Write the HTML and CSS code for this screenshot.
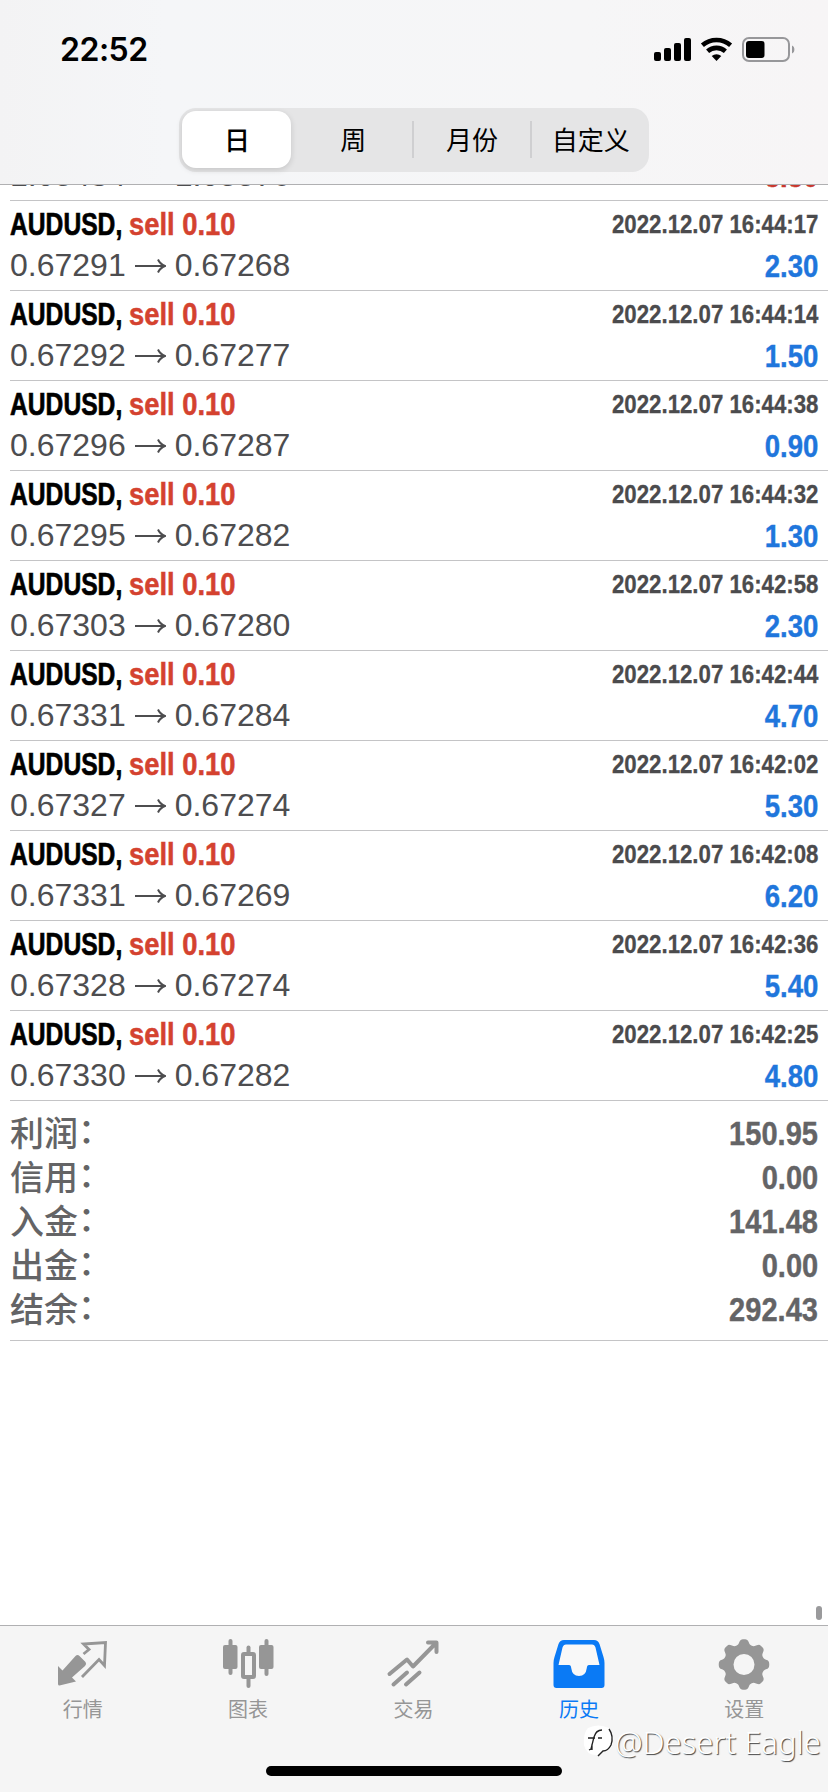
FILE: index.html
```html
<!DOCTYPE html>
<html lang="zh-CN">
<head>
<meta charset="utf-8">
<title>历史</title>
<link rel="stylesheet" href="styles.css">
</head>
<body>
<div class="screen">
  <header class="header">
    <div class="status">
      <span class="clock">22:52</span>
      <svg class="status-icons" width="144" height="28" viewBox="0 0 144 28">
        <rect x="1" y="16" width="7" height="9" rx="2"/>
        <rect x="11" y="12" width="7" height="13" rx="2"/>
        <rect x="21" y="7" width="7" height="18" rx="2"/>
        <rect x="31" y="2" width="7" height="23" rx="2"/>
        <g fill="none" stroke="#000" stroke-width="4.6">
          <path d="M49.4 9.2a21.5 21.5 0 0 1 28.2 0"/>
          <path d="M54.6 15.2a13.5 13.5 0 0 1 17.8 0"/>
        </g>
        <path d="M58.7 19.900a7.500 7.500 0 0 1 9.600 0L63.500 25z"/>
        <rect x="90" y="2" width="46" height="23" rx="6" fill="none" stroke="#97979a" stroke-width="2"/>
        <rect x="93" y="5" width="18.500" height="17" rx="3"/>
        <path d="M139 9.500c3.200 1.200 3.200 6.800 0 8z" fill="#97979a"/>
      </svg>
    </div>
    <nav class="segments">
      <span class="segment active">日</span>
      <span class="segment">周</span>
      <span class="segment ruled">月份</span>
      <span class="segment ruled">自定义</span>
    </nav>
  </header>
  <main class="history" id="history"></main>
  <footer class="tabs">
    <a class="tab">
      <svg width="52" height="52" viewBox="0 0 52 52">
        <path d="M1 26l4.500 4.500L18.500 16q2-2 4 0l6 6q1.500 2-.5 4L15 37.500l4 4L2.500 45.500Q1 45.500 1 44z" fill="#969696"/>
        <path d="M26.500 14l5.500-4.500-5.500-5.500L48.500 2.500l-1 23-5.500-6L25 37" fill="none" stroke="#969696" stroke-width="2.800"/>
      </svg>
      <span>行情</span>
    </a>
    <a class="tab">
      <svg width="52" height="52" viewBox="0 0 52 52" fill="#969696">
        <rect x="6.500" y="-1" width="4" height="36" rx="2"/><rect x="1" y="5" width="14.500" height="24" rx="2"/>
        <rect x="42.500" y="-1" width="4" height="37" rx="2"/><rect x="37" y="5" width="14.500" height="24" rx="2"/>
        <rect x="24.500" y="5.500" width="4" height="10" rx="2"/><rect x="24.500" y="36" width="4" height="12" rx="2"/>
        <rect x="21" y="14" width="11" height="23" rx="1" fill="none" stroke="#969696" stroke-width="4"/>
      </svg>
      <span>图表</span>
    </a>
    <a class="tab">
      <svg width="52" height="52" viewBox="0 0 52 52" fill="none" stroke="#969696" stroke-width="4" stroke-linecap="round" stroke-linejoin="round">
        <path d="M2.500 34L20 19.500l6 7L49 3M41 2.500h8.500V12M6.500 44.500L20 32.500M19 44.500l13.500-12"/>
      </svg>
      <span>交易</span>
    </a>
    <a class="tab current">
      <svg width="52" height="52" viewBox="0 0 52 52">
        <path d="M11 0h30q4 0 5.500 4l4 13q1 3 1 6v22q0 3-3 3h-45q-3 0-3-3V23q0-3 1-6l4-13Q7 0 11 0z" fill="#0a7af5"/>
        <path d="M13 4.500h26q2.500 0 3.500 3l4 17.500H36q-2 0-2.200 3-1 8-7.800 8t-7.800-8Q18 25 16 25H5.500l4-17.500q1-3 3.500-3z" fill="#f8f8f8"/>
      </svg>
      <span>历史</span>
    </a>
    <a class="tab">
      <svg width="52" height="52" viewBox="0 0 52 52">
        <path id="gear" fill="#969696" fill-rule="evenodd"/>
      </svg>
      <span>设置</span>
    </a>
    <div class="home"></div>
  </footer>
  <div class="scrollbar"></div>
  <div class="watermark">
    <svg width="34" height="34" viewBox="0 0 34 34">
      <path d="M5 3Q15-2 26 3q7 9 3 18-3 6-9 6l-6 3Q3 30 1 20 0 8 5 3z" fill="#fff"/>
      <path d="M6 25l2-1 3-12q2-7 8-7M5 13h7M15 13h4M9 19v6" fill="none" stroke="#222" stroke-width="1.300"/>
      <path d="M26 4q5 7 2 16-3 6-8 6l-5 5" fill="none" stroke="#222" stroke-width="1.400"/>
    </svg>
    <span>@Desert Eagle</span>
  </div>
</div>
<script src="app.js"></script>
</body>
</html>
```
FILE: styles.css
```css
* { box-sizing: border-box; }
body { margin: 0; background: #fff; font-family: "Liberation Sans", "Noto Sans CJK SC", sans-serif; }
.screen { position: relative; display: flex; flex-direction: column; height: 1792px; overflow: hidden; }

.header { position: relative; z-index: 1; flex: none; height: 185px; background: linear-gradient(90deg, #f3f3f4, #f5f6f8 20%, #f6f6f7 70%, #f7f5f6); border-bottom: 1px solid #b0b0b2; }
.status { display: flex; justify-content: space-between; align-items: center; height: 108px; padding: 0 31px 8px 60px; }
.clock { font: 600 32px/40px Inter, sans-serif; letter-spacing: -.5px; }
.segments { display: flex; width: 470px; height: 64px; margin: 0 auto 0 179px; padding: 3px 0 3px 3px; border-radius: 17px; background: #e5e5e6; }
.segment { position: relative; flex: 1; text-align: center; font: 400 26px/56px "Noto Sans CJK SC", sans-serif; color: #000; }
.segment.active { flex: 0 0 109px; margin-right: 4px; padding-left: 1px; font-weight: 500; height: 57px; background: #fff; border-radius: 14px; box-shadow: 0 2px 6px rgba(0,0,0,.14); }
.segment.ruled { border-left: 2px solid transparent; border-image: linear-gradient(transparent 18%, #cfcfd1 18%, #cfcfd1 80%, transparent 80%) 1; }

.history { flex: none; margin-top: -74px; padding-left: 10px; height: 1514px; }
.deal { display: grid; grid-template-columns: 1fr auto; grid-template-rows: 43px 46px; height: 90px; border-bottom: 1px solid #c4c4c6; padding-right: 10px; white-space: nowrap; }
.title { display: flex; font-weight: 700; font-size: 32px; line-height: 46px; }
.symbol { width: 119px; transform: scaleX(.77); transform-origin: 0 0; color: #000; -webkit-text-stroke: .7px; }
.side { transform: scaleX(.855); transform-origin: 0 0; color: #d4422f; -webkit-text-stroke: .5px; }
.time { font-weight: 700; font-size: 26px; line-height: 46px; transform: scaleX(.855); transform-origin: 100% 0; color: #4b4b4d; -webkit-text-stroke: .3px; }
.prices { display: flex; font-size: 32px; line-height: 42px; color: #4d4d4f; }
.prices svg { flex: none; margin: 13px 9px 0 9px; }
.profit { justify-self: end; font-weight: 700; font-size: 31.5px; line-height: 44px; transform: scaleX(.875); transform-origin: 100% 0; color: #1f76dc; -webkit-text-stroke: .4px; }
.profit.loss { color: #c8382e; }

.summary { padding: 9px 10px 0 0; height: 240px; border-bottom: 1px solid #c4c4c6; }
.total { display: flex; justify-content: space-between; height: 44px; line-height: 44px; color: #646466; }
.label { display: flex; font: 500 34px/44px "Noto Sans CJK SC", sans-serif; }
.colon { margin-top: -3px; }
.amount { font-weight: 700; font-size: 33px; line-height: 47px; transform: scaleX(.88); transform-origin: 100% 0; -webkit-text-stroke: .4px; }

.tabs { flex: none; display: grid; grid-template-columns: repeat(5, 1fr); position: relative; height: 167px; padding-right: 1px; background: #f5f5f5; border-top: 1px solid #b0b0b2; }
.tab { display: flex; flex-direction: column; align-items: center; padding-top: 14px; font: 400 20px/28px "Noto Sans CJK SC", sans-serif; color: #969696; }
.tab svg { flex: none; overflow: visible; margin-bottom: 3px; }
.tab.current { color: #0a7af5; }
.home { position: absolute; left: 266px; top: 140px; width: 296px; height: 10px; border-radius: 5px; background: #000; }
.scrollbar { position: absolute; left: 816px; top: 1606px; width: 6px; height: 14px; border-radius: 3px; background: #9a9a9c; }
.watermark { position: absolute; left: 583px; top: 1725px; display: flex; white-space: nowrap; font: 300 31px/34px "Noto Sans", sans-serif; color: #fff; }
.watermark span { text-shadow: 1px 1px 1px #444; margin-left: -2px; }
```
FILE: app.js
```js
const deals = [
  ['1.05434', '1.05576', '', '5.50'],
  ['0.67291', '0.67268', '16:44:17', '2.30'],
  ['0.67292', '0.67277', '16:44:14', '1.50'],
  ['0.67296', '0.67287', '16:44:38', '0.90'],
  ['0.67295', '0.67282', '16:44:32', '1.30'],
  ['0.67303', '0.67280', '16:42:58', '2.30'],
  ['0.67331', '0.67284', '16:42:44', '4.70'],
  ['0.67327', '0.67274', '16:42:02', '5.30'],
  ['0.67331', '0.67269', '16:42:08', '6.20'],
  ['0.67328', '0.67274', '16:42:36', '5.40'],
  ['0.67330', '0.67282', '16:42:25', '4.80']
];
const totals = [['利润', '150.95'], ['信用', '0.00'], ['入金', '141.48'], ['出金', '0.00'], ['结余', '292.43']];
const arrow = '<svg width="31" height="18" viewBox="0 0 31 18" fill="none" stroke="#4d4d4f" stroke-width="2"><path d="M0 9h29M23 2.500q2 4.500 7 6.500-5 2-7 6.500"/></svg>';

// The first deal is scrolled under the header, so its title line stays empty.
document.getElementById('history').innerHTML = deals.map(([open, close, time, profit]) => `
  <div class="deal">
    <div class="title">${time ? '<span class="symbol">AUDUSD,</span><span class="side">sell 0.10</span>' : ''}</div>
    <div class="time">${time ? '2022.12.07 ' + time : ''}</div>
    <div class="prices"><span>${open}</span>${arrow}<span>${close}</span></div>
    <div class="profit${time ? '' : ' loss'}">${profit}</div>
  </div>`).join('') + '<div class="summary">' + totals.map(([label, amount]) => `
  <div class="total"><span class="label">${label}<span class="colon">：</span></span><span class="amount">${amount}</span></div>`).join('') + '</div>';

// Eight-lobed gear outline with a round hole.
let gear = '';
for (let i = 0; i <= 144; i++) {
  const a = i / 144 * Math.PI * 2;
  const r = 22.700 + 2.700 * Math.tanh(1.6 * Math.cos(8 * a) + 0.2);
  gear += (i ? 'L' : 'M') + (26 + r * Math.cos(a)).toFixed(2) + ' ' + (24.5 + r * Math.sin(a)).toFixed(2);
}
gear += 'ZM15.500 24.500a10.500 10.500 0 1 0 21 0a10.500 10.500 0 1 0-21 0z';
document.getElementById('gear').setAttribute('d', gear);
```
